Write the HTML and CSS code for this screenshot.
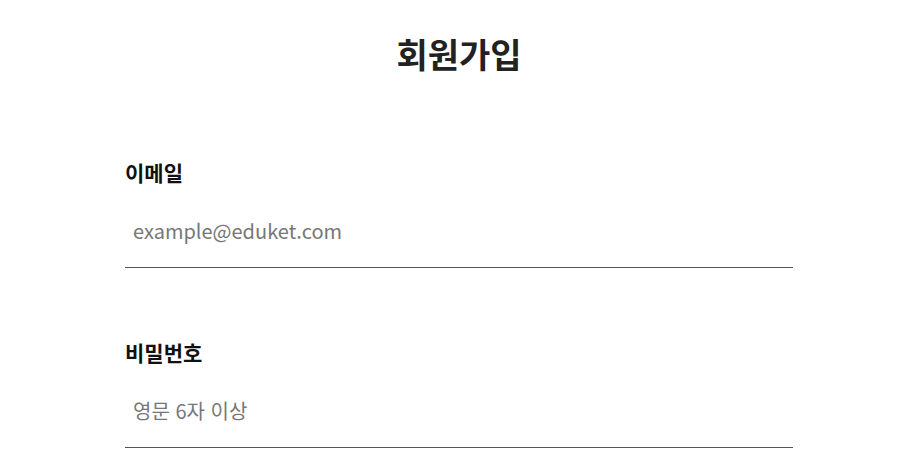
FILE: index.html
```html
<!DOCTYPE html>
<html lang="ko">
  <head>
    <meta charset="UTF-8" />
    <meta name="viewport" content="width=device-width, initial-scale=1.0" />
    <title>회원가입</title>
    <link rel="stylesheet" href="styles.css">
  </head>
  <body>
    <div class="container">
      <h1 class="title">회원가입</h1>
      <form class="signup">
        <div class="field">
          <label for="email">이메일</label>
          <input type="email" id="email" name="email" placeholder="example@eduket.com" />
        </div>
        <div class="field">
          <label for="password">비밀번호</label>
          <input type="password" id="password" name="password" placeholder="영문 6자 이상" />
        </div>
      </form>
    </div>
  </body>
</html>
```

FILE: styles.css
```css
body {
  margin: 0;
  font-family: "Noto Sans CJK KR", "Noto Sans", sans-serif;
  background-color: #fff;
  color: #222;
}
.container {
  width: 668px;
  margin: 0 auto;
  padding-top: 29px;
}
.title {
  margin: 0;
  font-size: 34px;
  line-height: 50px;
  font-weight: bold;
  text-align: center;
  color: #222;
}
.signup {
  display: flex;
  flex-direction: column;
  gap: 69px;
  margin-top: 78px;
}
.field {
  display: flex;
  flex-direction: column;
}
label {
  font-size: 21px;
  line-height: 30px;
  font-weight: bold;
  color: #111;
}
input {
  margin-top: 20px;
  border: none;
  border-bottom: 1px solid #555;
  outline: none;
  padding: 9px 8px 21px;
  font-size: 20px;
  line-height: 30px;
  font-family: "Noto Sans CJK KR", "Noto Sans", sans-serif;
  color: #222;
}
input::placeholder {
  color: #777;
}
```
